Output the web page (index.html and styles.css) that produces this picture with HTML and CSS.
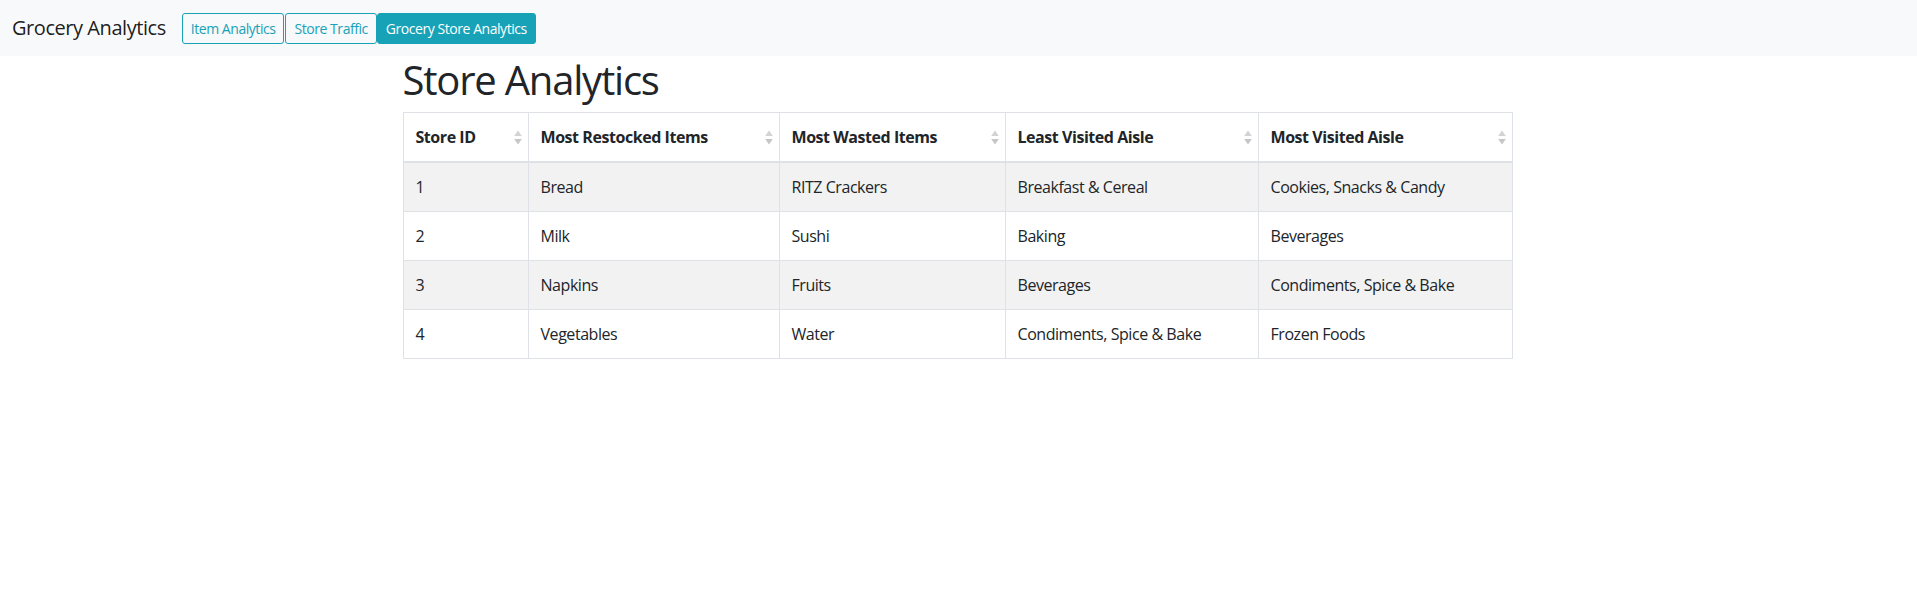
FILE: index.html
```html
<!DOCTYPE html>
<html lang="en">
<head>
<meta charset="utf-8">
<title>Grocery Analytics</title>
<link rel="stylesheet" href="styles.css">
</head>
<body>
<nav class="navbar">
  <span class="brand">Grocery Analytics</span>
  <div class="nav-buttons">
    <a class="btn btn-outline">Item Analytics</a>
    <a class="btn btn-outline">Store Traffic</a>
    <a class="btn btn-filled">Grocery Store Analytics</a>
  </div>
</nav>
<main class="container">
  <h1 class="title">Store Analytics</h1>
  <table class="data-table">
    <colgroup>
      <col class="c1"><col class="c2"><col class="c3"><col class="c4"><col class="c5">
    </colgroup>
    <thead>
      <tr>
        <th><div class="th-inner"><span>Store ID</span><svg class="sort" viewBox="0 0 8 15" width="8" height="15"><path d="M4 0.5 L7.8 6 L0.2 6 Z" fill="#d3d3d3"/><path d="M0.2 9 L7.8 9 L4 14.5 Z" fill="#c6c6c6"/></svg></div></th>
        <th><div class="th-inner"><span>Most Restocked Items</span><svg class="sort" viewBox="0 0 8 15" width="8" height="15"><path d="M4 0.5 L7.8 6 L0.2 6 Z" fill="#d3d3d3"/><path d="M0.2 9 L7.8 9 L4 14.5 Z" fill="#c6c6c6"/></svg></div></th>
        <th><div class="th-inner"><span>Most Wasted Items</span><svg class="sort" viewBox="0 0 8 15" width="8" height="15"><path d="M4 0.5 L7.8 6 L0.2 6 Z" fill="#d3d3d3"/><path d="M0.2 9 L7.8 9 L4 14.5 Z" fill="#c6c6c6"/></svg></div></th>
        <th><div class="th-inner"><span>Least Visited Aisle</span><svg class="sort" viewBox="0 0 8 15" width="8" height="15"><path d="M4 0.5 L7.8 6 L0.2 6 Z" fill="#d3d3d3"/><path d="M0.2 9 L7.8 9 L4 14.5 Z" fill="#c6c6c6"/></svg></div></th>
        <th><div class="th-inner"><span>Most Visited Aisle</span><svg class="sort" viewBox="0 0 8 15" width="8" height="15"><path d="M4 0.5 L7.8 6 L0.2 6 Z" fill="#d3d3d3"/><path d="M0.2 9 L7.8 9 L4 14.5 Z" fill="#c6c6c6"/></svg></div></th>
      </tr>
    </thead>
    <tbody>
      <tr><td>1</td><td>Bread</td><td>RITZ Crackers</td><td>Breakfast &amp; Cereal</td><td>Cookies, Snacks &amp; Candy</td></tr>
      <tr><td>2</td><td>Milk</td><td>Sushi</td><td>Baking</td><td>Beverages</td></tr>
      <tr><td>3</td><td>Napkins</td><td>Fruits</td><td>Beverages</td><td>Condiments, Spice &amp; Bake</td></tr>
      <tr><td>4</td><td>Vegetables</td><td>Water</td><td>Condiments, Spice &amp; Bake</td><td>Frozen Foods</td></tr>
    </tbody>
  </table>
</main>
</body>
</html>
```

FILE: styles.css
```css
* {
  box-sizing: border-box;
}

html, body {
  margin: 0;
  padding: 0;
  background: #ffffff;
}

body {
  font-family: "Open Sans", "Noto Sans", sans-serif;
  font-size: 16px;
  line-height: 1.5;
  color: #212529;
  letter-spacing: -0.028em;
}

.navbar {
  display: flex;
  align-items: center;
  height: 56px;
  padding: 8px 12px;
  background: #f8f9fa;
}

.brand {
  font-size: 20px;
  line-height: 30px;
  padding: 5px 0;
  margin-right: 16px;
  color: rgba(0, 0, 0, 0.9);
}

.nav-buttons {
  display: flex;
  gap: 0;
}

.btn {
  display: inline-block;
  font-size: 14px;
  line-height: 21px;
  padding: 4px 8px;
  border: 1px solid #17a2b8;
  border-radius: 3px;
  color: #17a2b8;
  background: transparent;
  text-decoration: none;
  white-space: nowrap;
}

.btn-outline + .btn-outline {
  margin-left: 1px;
}

.btn-filled {
  background: #17a2b8;
  color: #ffffff;
}

.container {
  width: 1140px;
  margin: 0 auto;
  padding: 0 16px 0 14px;
}

.title {
  font-size: 40px;
  font-weight: 400;
  line-height: 48px;
  margin: 0 0 8px 0;
  letter-spacing: -0.03em;
}

.data-table {
  width: 1109px;
  border-collapse: collapse;
  table-layout: fixed;
}

.c1 { width: 125px; }
.c2 { width: 251px; }
.c3 { width: 226px; }
.c4 { width: 253px; }
.c5 { width: 254px; }

.data-table th,
.data-table td {
  border: 1px solid #dee2e6;
  text-align: left;
}

.data-table th {
  padding: 0;
  border-bottom-width: 2px;
  font-weight: 700;
  vertical-align: bottom;
}

.th-inner {
  display: flex;
  align-items: center;
  justify-content: space-between;
  padding: 12px 6px 12px 12px;
}

.sort {
  flex: none;
  display: block;
}

.data-table td {
  padding: 12px;
  vertical-align: top;
}

.data-table tbody tr:nth-child(odd) {
  background: #f2f2f2;
}
```
